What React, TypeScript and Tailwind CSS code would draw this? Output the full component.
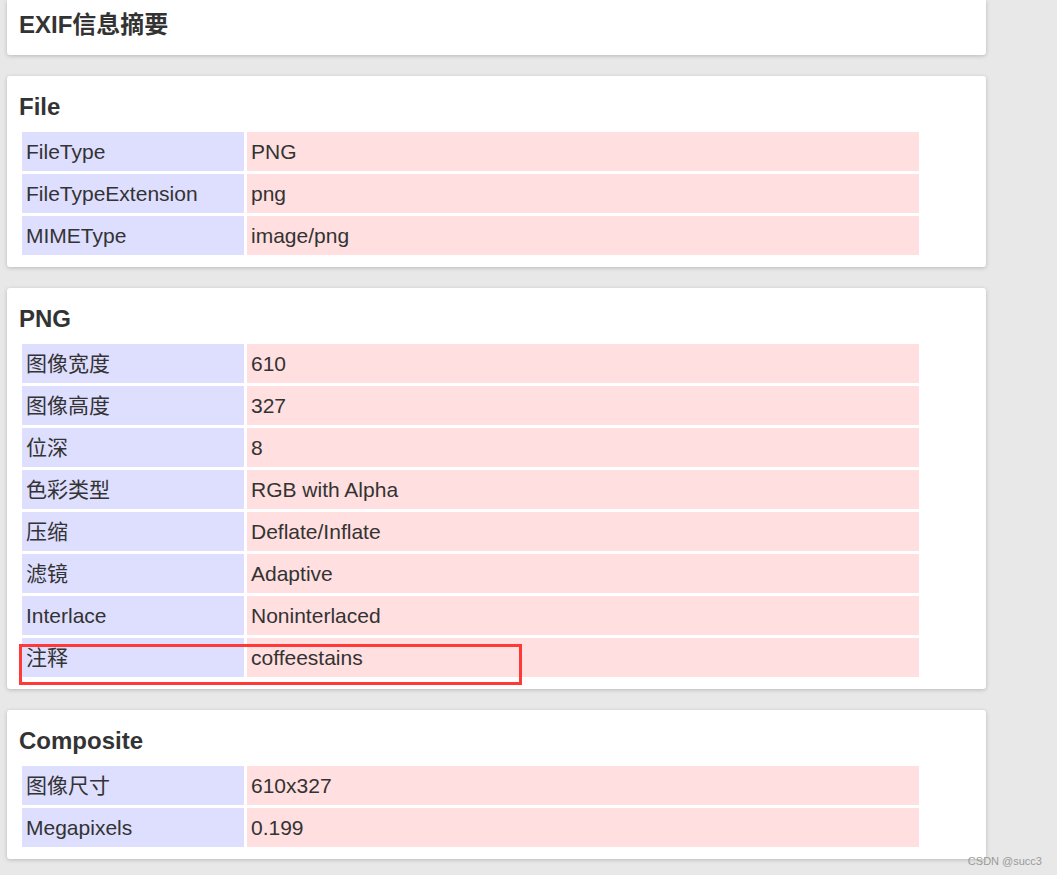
import React from "react";

type Row = [string, string];

const sections: { title: string; rows: Row[] }[] = [
  {
    title: "File",
    rows: [
      ["FileType", "PNG"],
      ["FileTypeExtension", "png"],
      ["MIMEType", "image/png"],
    ],
  },
  {
    title: "PNG",
    rows: [
      ["图像宽度", "610"],
      ["图像高度", "327"],
      ["位深", "8"],
      ["色彩类型", "RGB with Alpha"],
      ["压缩", "Deflate/Inflate"],
      ["滤镜", "Adaptive"],
      ["Interlace", "Noninterlaced"],
      ["注释", "coffeestains"],
    ],
  },
  {
    title: "Composite",
    rows: [
      ["图像尺寸", "610x327"],
      ["Megapixels", "0.199"],
    ],
  },
];

const font = {
  fontFamily:
    '"Liberation Sans", Arial, "Noto Sans CJK SC", sans-serif',
};

function Card({ title, rows }: { title: string; rows: Row[] }) {
  return (
    <div className="w-[979px] bg-white rounded-[3px] shadow-[0_1px_4px_rgba(0,0,0,0.2)] pl-[12px] pb-[12px]">
      <div className="h-[56px] flex items-center">
        <h2 className="text-[24px] font-bold text-[#333] pt-[6px]">{title}</h2>
      </div>
      <div className="flex flex-col gap-[3px] pl-[3px]">
        {rows.map(([k, v], i) => (
          <div key={i} className="relative flex gap-[3px] h-[39px]">
            <div className="w-[222px] bg-[#dedeff] flex items-center pl-[4px] text-[21px] text-[#333]">
              {k}
            </div>
            <div className="w-[672px] bg-[#ffdfdf] flex items-center pl-[4px] text-[21px] text-[#333]">
              {v}
            </div>
            {k === "注释" && (
              <div className="absolute left-[-3px] top-[6px] w-[503px] h-[41px] border-[3px] border-[#ff3838]" />
            )}
          </div>
        ))}
      </div>
    </div>
  );
}

export default function App() {
  return (
    <div
      className="relative w-[1057px] h-[875px] bg-[#e8e8e8] overflow-hidden pl-[7px]"
      style={font}
    >
      <div className="flex flex-col gap-[21px]">
        <div className="w-[979px] h-[55px] bg-white rounded-b-[3px] shadow-[0_1px_4px_rgba(0,0,0,0.2)] pl-[12px] flex items-center pb-[6px]">
          <h1 className="text-[24px] font-bold text-[#333]">EXIF信息摘要</h1>
        </div>
        {sections.map((s) => (
          <Card key={s.title} title={s.title} rows={s.rows} />
        ))}
      </div>
      <div className="absolute right-[15px] bottom-[6px] text-[11px] text-[#9a9a9a]">
        CSDN @succ3
      </div>
    </div>
  );
}
